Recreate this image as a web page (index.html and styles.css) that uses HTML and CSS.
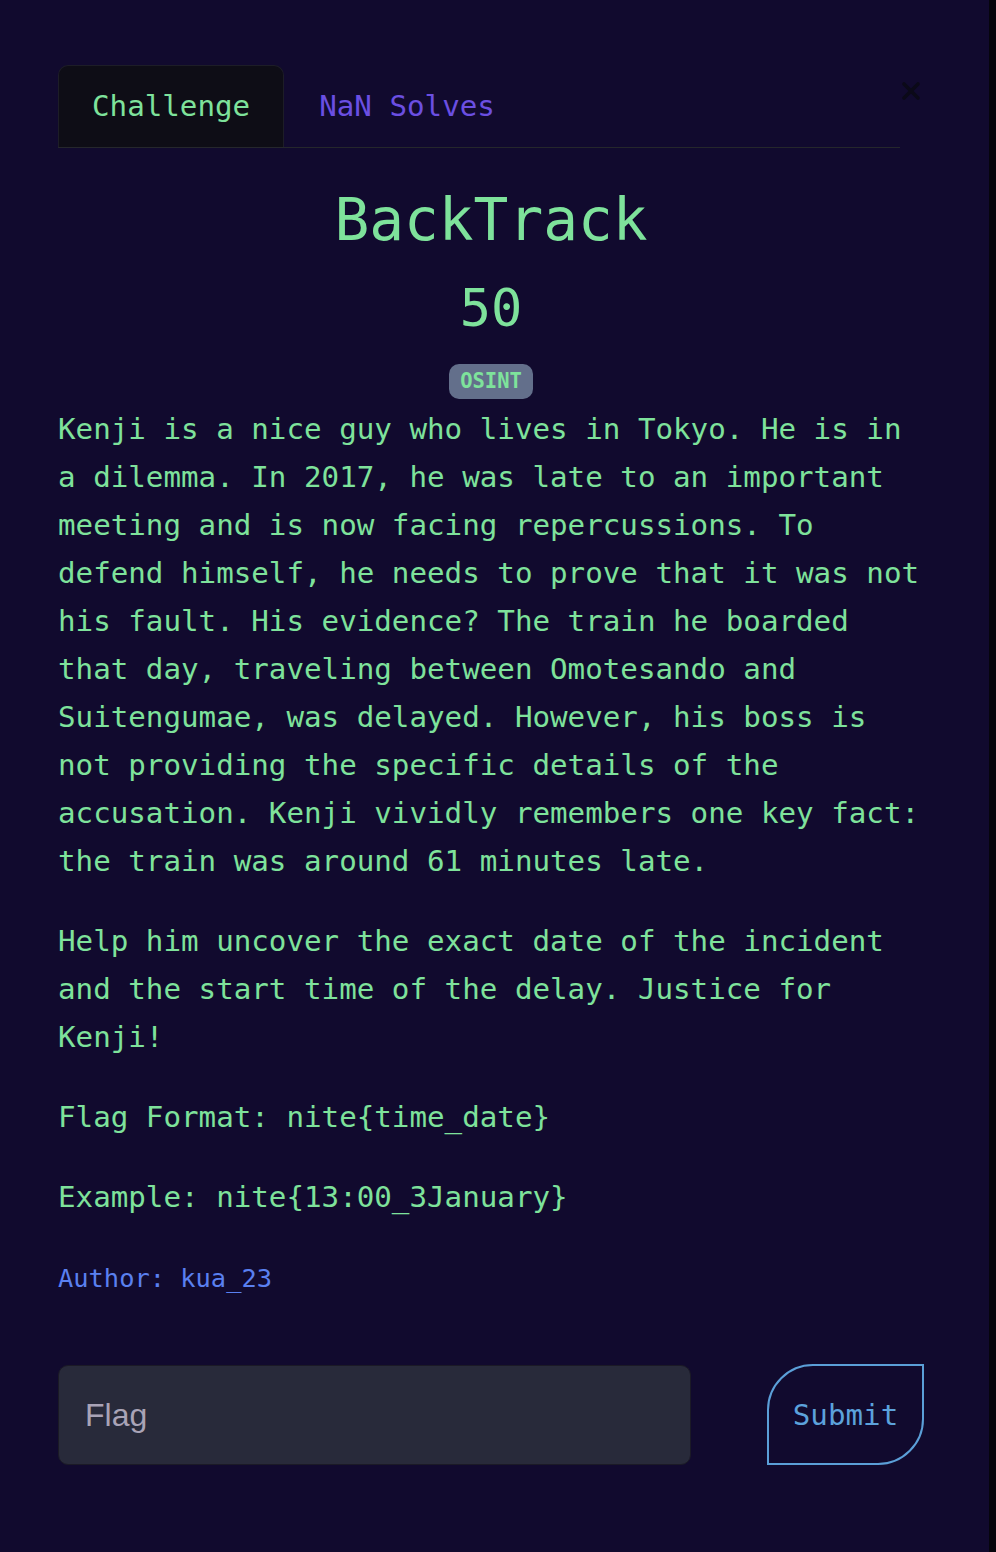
FILE: index.html
```html
<!DOCTYPE html>
<html lang="en">
<head>
<meta charset="utf-8">
<title>BackTrack</title>
<link rel="stylesheet" href="styles.css">
</head>
<body>
<div class="page">
  <div class="modal">
    <button class="close" aria-label="Close">
      <svg width="20" height="20" viewBox="0 0 20 20"><path d="M3 3 L17 17 M17 3 L3 17" stroke="#0b0918" stroke-width="3.6" stroke-linecap="round" fill="none"/></svg>
    </button>
    <div class="tabs">
      <div class="tab active">Challenge</div>
      <div class="tab solves">NaN Solves</div>
    </div>
    <h1 class="title">BackTrack</h1>
    <div class="points">50</div>
    <div class="tags"><span class="badge">OSINT</span></div>
    <div class="desc">
      <p>Kenji is a nice guy who lives in Tokyo. He is in a dilemma. In 2017, he was late to an important meeting and is now facing repercussions. To defend himself, he needs to prove that it was not his fault. His evidence? The train he boarded that day, traveling between Omotesando and Suitengumae, was delayed. However, his boss is not providing the specific details of the accusation. Kenji vividly remembers one key fact: the train was around 61 minutes late.</p>
      <p>Help him uncover the exact date of the incident and the start time of the delay. Justice for Kenji!</p>
      <p>Flag Format: nite{time_date}</p>
      <p>Example: nite{13:00_3January}</p>
    </div>
    <div class="author">Author: kua_23</div>
    <form class="submit-row">
      <input class="flag-input" type="text" placeholder="Flag">
      <button class="submit" type="button">Submit</button>
    </form>
  </div>
  <div class="edge"></div>
</div>
</body>
</html>
```

FILE: styles.css
```css
html, body {
  margin: 0;
  padding: 0;
  background: #110a2e;
}

.page {
  display: flex;
  width: 996px;
  min-height: 1552px;
}

.modal {
  position: relative;
  flex: 1;
  box-sizing: border-box;
  min-height: 1552px;
  padding: 65px 65px 0 58px;
  background: #110a2e;
  font-family: "DejaVu Sans Mono", "Liberation Mono", monospace;
  color: #7ee29b;
}

.edge {
  width: 7px;
  background: #06050c;
}

.close {
  position: absolute;
  left: 901px;
  top: 81px;
  width: 20px;
  height: 20px;
  padding: 0;
  border: none;
  background: transparent;
  display: flex;
}

.tabs {
  display: flex;
  margin-right: 24px;
  border-bottom: 1px solid #25272c;
  font-size: 29.2px;
  line-height: 48px;
}

.tab {
  padding: 16px 33px 17px;
  border: 1px solid transparent;
  border-bottom: none;
}

.tab.active {
  background: #0e0d16;
  border-color: #1d1d27;
  border-radius: 10px 10px 0 0;
  color: #7ee29b;
}

.tab.solves {
  padding-left: 34px;
  color: #6b4fe2;
}

.title {
  margin: 36px 0 0;
  text-align: center;
  font-weight: normal;
  font-size: 57.8px;
  line-height: 72px;
}

.points {
  margin-top: 20px;
  text-align: center;
  font-size: 52px;
  line-height: 64px;
}

.tags {
  display: flex;
  justify-content: center;
  margin-top: 24px;
}

.badge {
  height: 35px;
  box-sizing: border-box;
  padding: 0 11px;
  border-radius: 10px;
  background: #636f8b;
  color: #7ee29b;
  font-weight: bold;
  font-size: 20.5px;
  line-height: 35px;
}

.desc {
  margin-top: 6px;
  font-size: 29.2px;
  line-height: 48px;
}

.desc p {
  margin: 0 0 32px;
}

.desc p:last-child {
  margin-bottom: 0;
}

.author {
  margin-top: 39px;
  font-size: 25.4px;
  line-height: 36px;
  color: #5a80f0;
}

.submit-row {
  display: flex;
  align-items: flex-start;
  gap: 76px;
  margin: 68px 0 0;
}

.flag-input {
  width: 633px;
  height: 100px;
  box-sizing: border-box;
  margin-top: 1px;
  padding: 0 0 0 26px;
  border: 1px solid #1b1a26;
  border-radius: 10px;
  background: #282a3a;
  color: #d0ccda;
  font-family: "Liberation Sans", Arial, sans-serif;
  font-size: 32px;
  outline: none;
}

.flag-input::placeholder {
  color: #a9a3b6;
}

.submit {
  width: 157px;
  height: 101px;
  box-sizing: border-box;
  padding: 0;
  border: 2px solid #5b9fd8;
  border-radius: 46px 0 46px 0;
  background: transparent;
  color: #5ca2dc;
  font-family: "DejaVu Sans Mono", "Liberation Mono", monospace;
  font-size: 29.2px;
}
```
